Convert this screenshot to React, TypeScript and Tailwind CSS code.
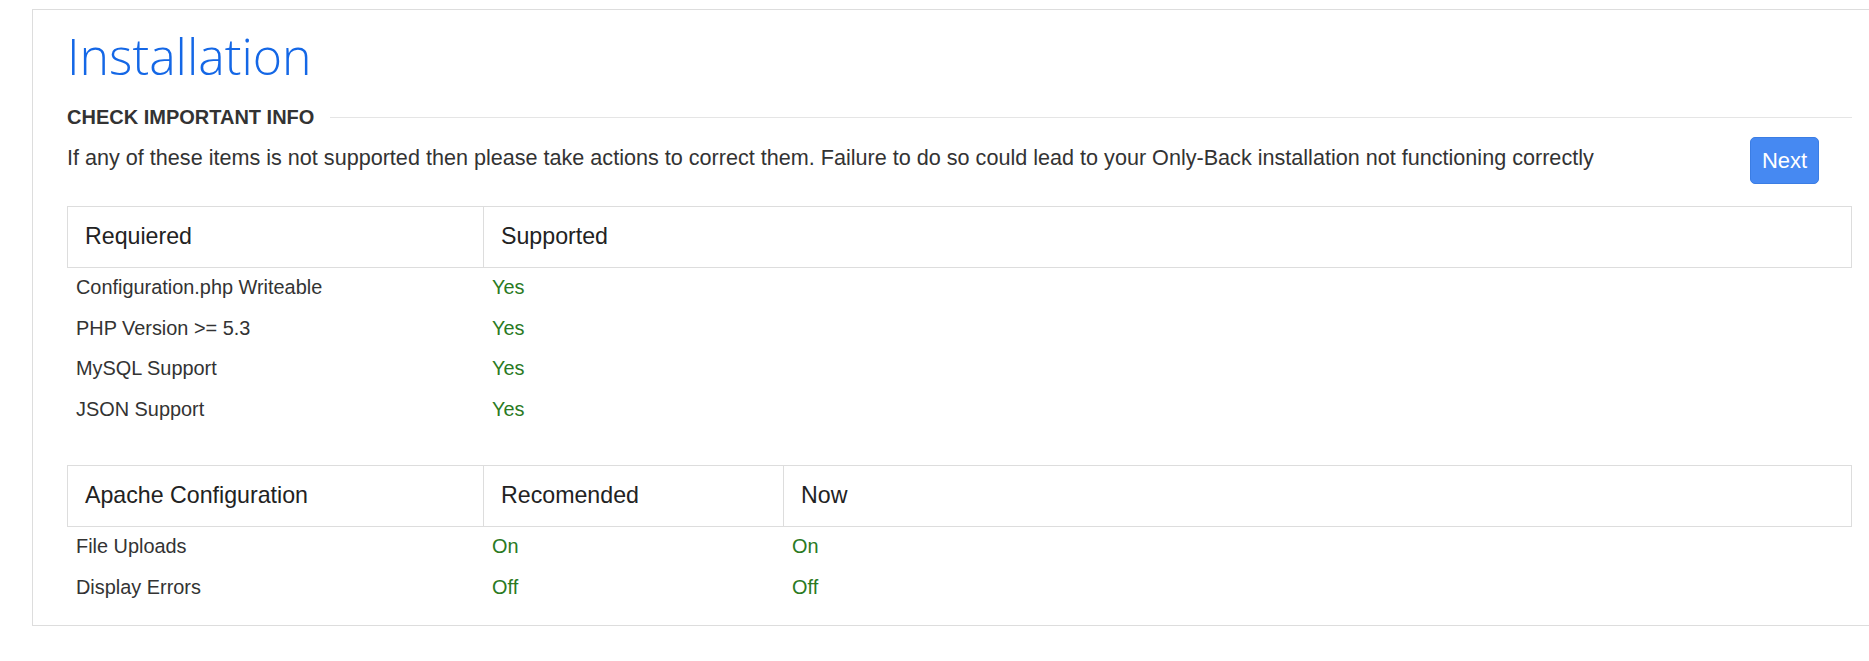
import React from "react";

const reqRows = [
  ["Configuration.php Writeable", "Yes"],
  ["PHP Version >= 5.3", "Yes"],
  ["MySQL Support", "Yes"],
  ["JSON Support", "Yes"],
];

const apacheRows = [
  ["File Uploads", "On", "On"],
  ["Display Errors", "Off", "Off"],
];

export default function App() {
  return (
    <div
      className="w-[1869px] h-[661px] overflow-hidden bg-white text-[#333]"
      style={{ fontFamily: '"Liberation Sans", Arial, sans-serif' }}
    >
      <div className="ml-[32px] mt-[9px] w-[1855px] border border-[#dddddd] px-[34px] pb-[16.5px]">
        <h1
          className="mt-[20px] h-[51px] text-[50px] leading-[52px] font-light text-[#1467e6]"
          style={{ fontFamily: '"Open Sans", sans-serif' }}
        >
          Installation
        </h1>

        <div className="mt-[24px] flex h-[24px] items-center">
          <h4 className="text-[20px] font-bold leading-[24px] text-[#333]">CHECK IMPORTANT INFO</h4>
          <div className="ml-[16px] h-px flex-1 bg-[#e5e5e5]" />
        </div>

        <div className="mt-[8px] flex h-[47px] items-start justify-between">
          <p className="mt-[6px] text-[21.6px] leading-[30px] text-[#333]">
            If any of these items is not supported then please take actions to correct them. Failure to do so could
            lead to your Only-Back installation not functioning correctly
          </p>
          <button className="mr-[33px] flex h-[47px] w-[69px] items-center justify-center rounded-[5px] border border-[#3b7de4] bg-[#4689f2] text-[22px] text-white">
            Next
          </button>
        </div>

        {/* Table 1 */}
        <div className="mt-[21.5px]">
          <div className="flex h-[62.5px] border border-[#dddddd] text-[23.2px] text-[#222]">
            <div className="flex w-[416px] items-center border-r border-[#dddddd] pl-[17px]">Requiered</div>
            <div className="flex flex-1 items-center pl-[17px]">Supported</div>
          </div>
          {reqRows.map(([name, val]) => (
            <div key={name} className="flex h-[40.5px] items-center text-[19.9px]">
              <div className="w-[417px] pl-[9px] text-[#333]">{name}</div>
              <div className="flex-1 pl-[8px] text-[#2a7a22]">{val}</div>
            </div>
          ))}
        </div>

        {/* Table 2 */}
        <div className="mt-[34.5px]">
          <div className="flex h-[62.5px] border border-[#dddddd] text-[23.2px] text-[#222]">
            <div className="flex w-[416px] items-center border-r border-[#dddddd] pl-[17px]">Apache Configuration</div>
            <div className="flex w-[300px] items-center border-r border-[#dddddd] pl-[17px]">Recomended</div>
            <div className="flex flex-1 items-center pl-[17px]">Now</div>
          </div>
          {apacheRows.map(([name, rec, now]) => (
            <div key={name} className="flex h-[40.5px] items-center text-[19.9px]">
              <div className="w-[417px] pl-[9px] text-[#333]">{name}</div>
              <div className="w-[300px] pl-[8px] text-[#2a7a22]">{rec}</div>
              <div className="flex-1 pl-[8px] text-[#2a7a22]">{now}</div>
            </div>
          ))}
        </div>
      </div>
    </div>
  );
}
